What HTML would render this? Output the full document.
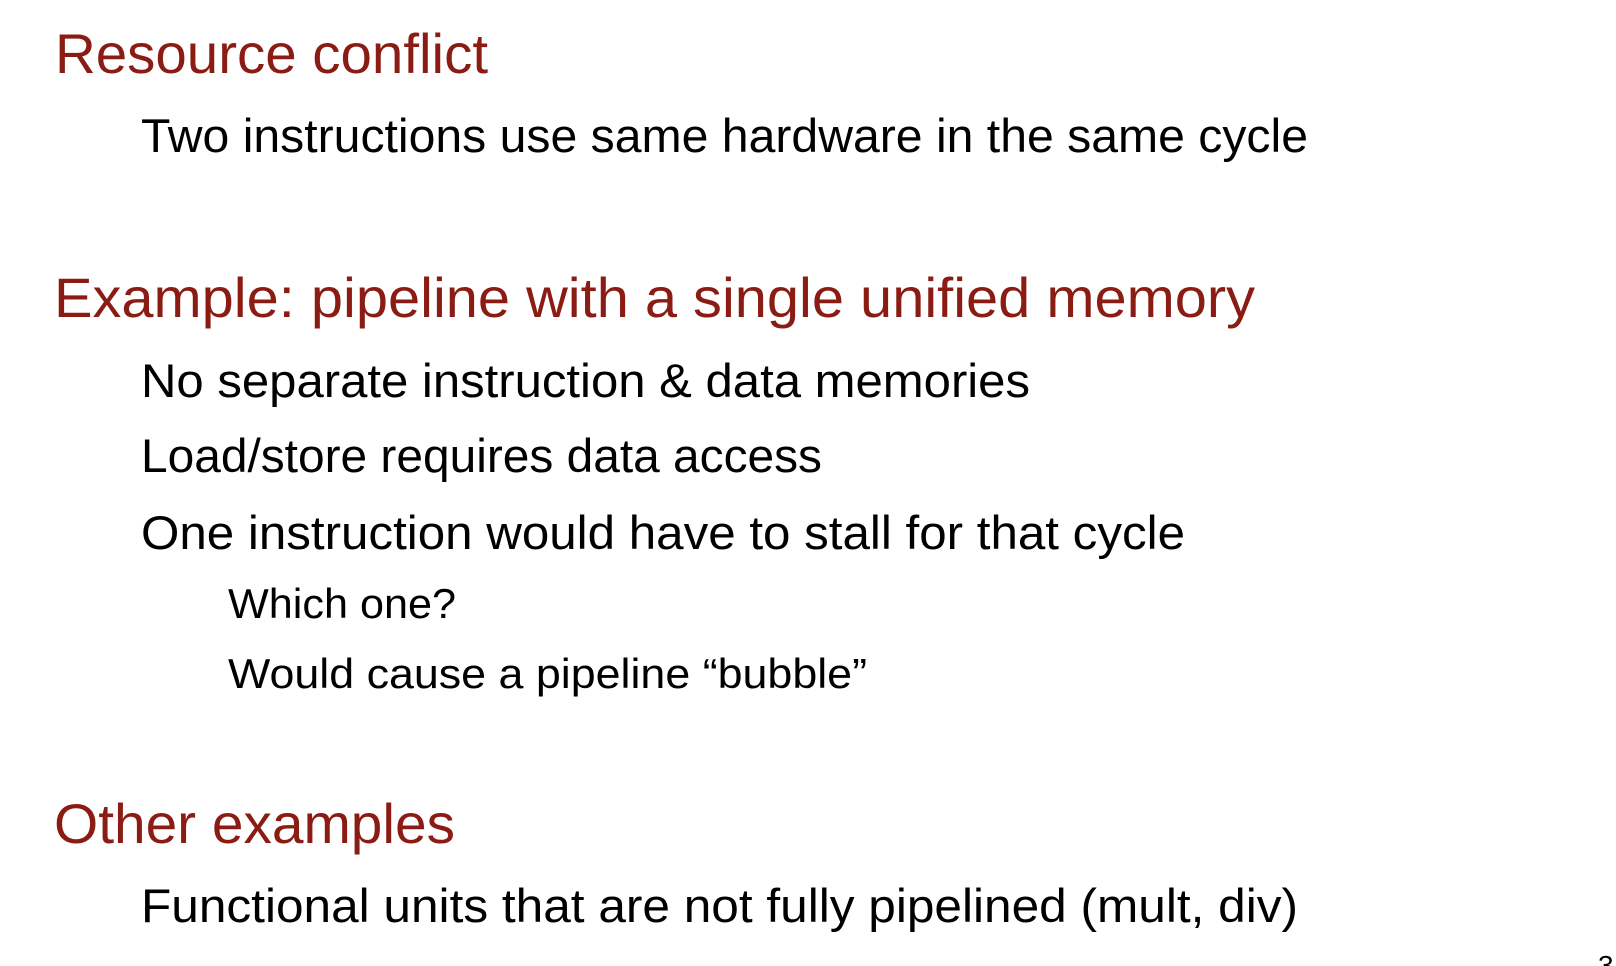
<!DOCTYPE html>
<html><head><meta charset="utf-8"><style>
html,body{margin:0;padding:0;background:#fff;width:1616px;height:966px;overflow:hidden}
svg{position:absolute;left:0;top:0}
text{font-family:"Liberation Sans",sans-serif}
.h{fill:#8a1c14;font-size:56px}
.b{fill:#000;font-size:47px}
.s{fill:#000;font-size:42px}
</style></head><body>
<svg width="1616" height="966" viewBox="0 0 1616 966">
<text class="h" x="55" y="73" textLength="433" lengthAdjust="spacingAndGlyphs">Resource conflict</text>
<text class="b" x="141" y="152" textLength="1167" lengthAdjust="spacingAndGlyphs">Two instructions use same hardware in the same cycle</text>
<text class="h" x="54" y="317" textLength="1201" lengthAdjust="spacingAndGlyphs">Example: pipeline with a single unified memory</text>
<text class="b" x="141" y="397" textLength="889" lengthAdjust="spacingAndGlyphs">No separate instruction &amp; data memories</text>
<text class="b" x="141" y="472" textLength="681" lengthAdjust="spacingAndGlyphs">Load/store requires data access</text>
<text class="b" x="141" y="549" textLength="1044" lengthAdjust="spacingAndGlyphs">One instruction would have to stall for that cycle</text>
<text class="s" x="228" y="618" textLength="228" lengthAdjust="spacingAndGlyphs">Which one?</text>
<text class="s" x="228" y="688" textLength="639" lengthAdjust="spacingAndGlyphs">Would cause a pipeline “bubble”</text>
<text class="h" x="54" y="843" textLength="401" lengthAdjust="spacingAndGlyphs">Other examples</text>
<text class="b" x="141" y="922" textLength="1157" lengthAdjust="spacingAndGlyphs">Functional units that are not fully pipelined (mult, div)</text>
<text x="1598" y="975" style="font-size:28px;fill:#000">3</text>
</svg>
</body></html>
